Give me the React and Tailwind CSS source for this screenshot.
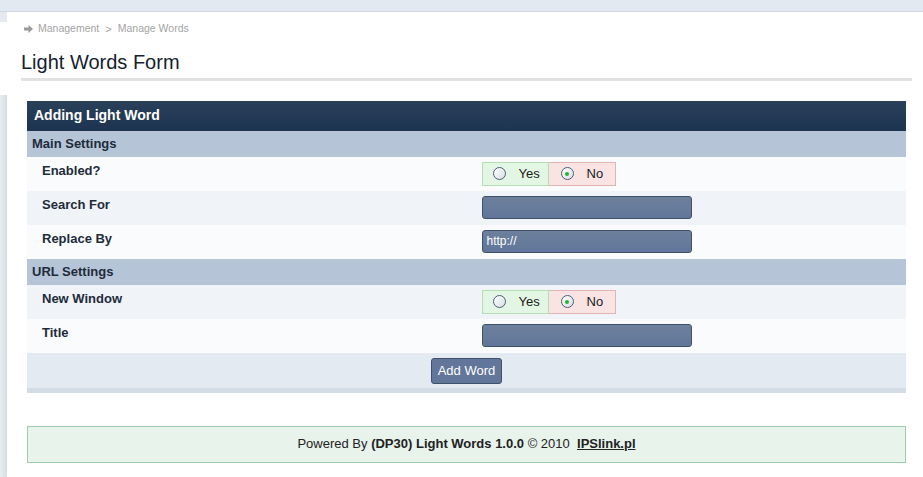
import React from 'react';

const Radio = ({ checked }) => (
    <span className="relative inline-block w-[13px] h-[13px] rounded-full border border-[#4a5f7a] bg-gradient-to-br from-white to-[#d8dde4]">
        {checked && (
            <span className="absolute left-[3.5px] top-[3.5px] w-[4px] h-[4px] rounded-full bg-[#2fb32f]" />
        )}
    </span>
);

const YesNo = ({ value }) => (
    <div className="flex h-[24px] text-[13px] text-[#1a1a1a]">
        <label className="flex items-center gap-[13px] w-[67px] pl-[10px] bg-[#e3f5e3] border border-[#b3dfb3]">
            <Radio checked={value} />
            <span>Yes</span>
        </label>
        <label className="flex items-center gap-[13px] w-[67px] pl-[12px] bg-[#f9e4e3] border border-l-0 border-[#e2b5b4]">
            <Radio checked={!value} />
            <span>No</span>
        </label>
    </div>
);

const TextInput = ({ value }) => (
    <div className="w-[210px] h-[23px] rounded-[3px] border border-[#3f5069] bg-gradient-to-b from-[#6c809c] to-[#62769a] text-white text-[12px] leading-[21px] px-[4px]">
        {value}
    </div>
);

const Section = ({ title }) => (
    <div className="h-[26px] bg-[#b5c4d6] px-[5px] flex items-center text-[13px] font-bold text-[#1e2b3b]">
        {title}
    </div>
);

const Row = ({ label, bg, children }) => (
    <div className={`grid grid-cols-2 h-[34px] ${bg}`}>
        <div className="pl-[15px] pt-[4px] text-[13px] font-bold text-[#1e2b3b]">{label}</div>
        <div className="pl-[15px] pt-[5px]">{children}</div>
    </div>
);

const App = () => {
    return (
        <div className="min-h-[477px] bg-white flex flex-col" style={{ fontFamily: '"Liberation Sans", Arial, sans-serif' }}>
            <div className="h-[12px] bg-[#e3e9f0] border-b border-[#d0d7e0]" />
            <div className="flex flex-1">
                <div className="w-[7px] flex flex-col">
                    <div className="h-[10px] bg-[#e6eaf0]" />
                    <div className="h-[73px] bg-white" />
                    <div className="flex-1 bg-gradient-to-r from-[#e9edf2] to-[#d6dde7]" />
                </div>
                <div className="flex-1 bg-white">
                    <div className="flex items-center gap-[5px] pl-[17px] pt-[9px] text-[11px] text-[#a3a3a3]">
                        <svg width="9" height="8" viewBox="0 0 9 8">
                            <path d="M0 2.5h4.5V0L9 4 4.5 8V5.5H0z" fill="#9a9a9a" />
                        </svg>
                        <span className="text-[10.5px]">Management</span>
                        <span className="px-[1px]">&gt;</span>
                        <span className="text-[10.5px]">Manage Words</span>
                    </div>
                    <div className="ml-[14px] mr-[11px] mt-[11px] border-b-[3px] border-[#e1e1e1] pb-[3px]">
                        <h1 className="text-[20px] leading-[26px] text-[#15212e]">Light Words Form</h1>
                    </div>

                    <div className="ml-[20px] mr-[17px] mt-[20px]">
                        <div className="h-[30px] bg-gradient-to-b from-[#2a405a] to-[#1d3450] px-[7px] flex items-center text-[14px] font-bold text-white">
                            Adding Light Word
                        </div>
                        <Section title="Main Settings" />
                        <Row label="Enabled?" bg="bg-[#f9fbfc]">
                            <YesNo value={false} />
                        </Row>
                        <Row label="Search For" bg="bg-[#f0f3f7]">
                            <TextInput value="" />
                        </Row>
                        <Row label="Replace By" bg="bg-[#f9fbfc]">
                            <TextInput value="http://" />
                        </Row>
                        <Section title="URL Settings" />
                        <Row label="New Window" bg="bg-[#f0f3f7]">
                            <YesNo value={false} />
                        </Row>
                        <Row label="Title" bg="bg-[#f9fbfc]">
                            <TextInput value="" />
                        </Row>
                        <div className="h-[40px] bg-[#e4eaf2] border-b-[5px] border-[#d3dbe4] flex justify-center items-start pt-[5px]">
                            <button className="h-[26px] px-[6px] rounded-[3px] border border-[#3f5069] bg-[#61769a] text-white text-[13px]">
                                Add Word
                            </button>
                        </div>
                    </div>

                    <div className="ml-[20px] mr-[17px] mt-[33px] h-[37px] bg-[#e8f3ec] border border-[#9ecbb0] flex items-center justify-center text-[13px] text-[#222]">
                        <span>Powered By&nbsp;</span>
                        <b>(DP30) Light Words 1.0.0</b>
                        <span>&nbsp;© 2010&nbsp;&nbsp;</span>
                        <a className="font-bold underline">IPSlink.pl</a>
                    </div>
                </div>
            </div>
        </div>
    );
};

export default App;
